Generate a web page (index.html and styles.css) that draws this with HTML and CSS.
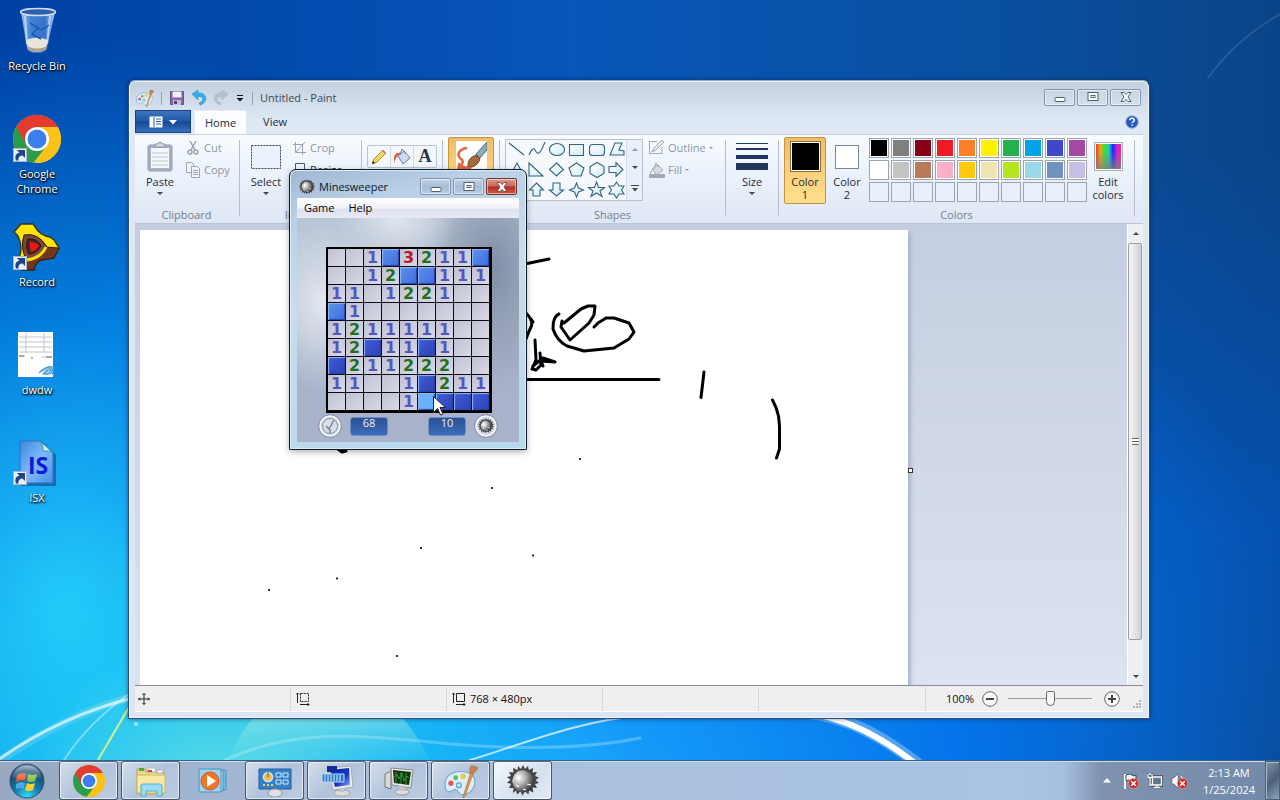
FILE: index.html
```html
<!DOCTYPE html>
<html lang="en">
<head>
<meta charset="utf-8">
<title>Desktop</title>
<link rel="stylesheet" href="styles.css">
</head>
<body>
<svg class="defs" aria-hidden="true">
  <defs>
    <linearGradient id="g-bin" x1="0" x2="1" y1="0" y2="0"><stop offset="0" stop-color="#9dc4ef"/><stop offset=".3" stop-color="#3f7fd4"/><stop offset=".7" stop-color="#3873cb"/><stop offset="1" stop-color="#a5c8f0"/></linearGradient>
    <linearGradient id="g-shape" x1="0" x2="1" y1="0" y2="1"><stop offset="0" stop-color="#ffffff"/><stop offset="1" stop-color="#d3ebf8"/></linearGradient>
    <linearGradient id="g-page" x1="0" x2="1" y1="0" y2="1"><stop offset="0" stop-color="#3c86da"/><stop offset=".5" stop-color="#7db9fb"/><stop offset="1" stop-color="#4a90e8"/></linearGradient>
    <linearGradient id="g-screen" x1="0" x2="1" y1="0" y2="1"><stop offset="0" stop-color="#0822a8"/><stop offset=".6" stop-color="#1735c4"/><stop offset="1" stop-color="#8fb2f5"/></linearGradient>
    <radialGradient id="g-mine" cx=".3" cy=".35" r=".75"><stop offset="0" stop-color="#ffffff"/><stop offset=".4" stop-color="#b8b8b8"/><stop offset="1" stop-color="#303030"/></radialGradient>
    <radialGradient id="g-orb" cx=".5" cy=".95" r=".95"><stop offset="0" stop-color="#30dcf5"/><stop offset=".4" stop-color="#127cae"/><stop offset=".8" stop-color="#1c4569"/><stop offset="1" stop-color="#6f8fae"/></radialGradient>
    <linearGradient id="g-shine" x1="0" x2="0" y1="0" y2="1"><stop offset="0" stop-color="#fff" stop-opacity=".75"/><stop offset="1" stop-color="#fff" stop-opacity=".1"/></linearGradient>
    <linearGradient id="g-rainbow"><stop offset="0" stop-color="#f43e23"/><stop offset=".18" stop-color="#e8a71e"/><stop offset=".35" stop-color="#2fe32f"/><stop offset=".52" stop-color="#1fc7c7"/><stop offset=".68" stop-color="#2323f5"/><stop offset=".85" stop-color="#d91fe0"/><stop offset="1" stop-color="#f02a60"/></linearGradient>
    <linearGradient id="g-fade" x1="0" x2="0" y1="0" y2="1"><stop offset=".3" stop-color="#808080" stop-opacity="0"/><stop offset="1" stop-color="#808080" stop-opacity=".8"/></linearGradient>
    <linearGradient id="g-beam" x1="0" x2="0" y1="0" y2="1"><stop offset="0" stop-color="#c8f6d8" stop-opacity=".5"/><stop offset="1" stop-color="#7fe6f0" stop-opacity=".08"/></linearGradient>
    <symbol id="i-chrome" viewBox="0 0 48 48">
      <circle cx="24" cy="24" r="24" fill="#fbc31a"/>
      <path d="M24 24 3.2 12A24 24 0 0 0 20.5 47.7L34.4 30Z" fill="#2a9d4a"/>
      <path d="M3.2 12A24 24 0 0 1 44.8 12H24L13.6 30Z" fill="#e33b2e"/>
      <path d="M24 12H44.8A24 24 0 0 1 22.8 48L34.4 30Z" fill="#fbc31a"/>
      <circle cx="24" cy="24" r="12" fill="#fff"/><circle cx="24" cy="24" r="9.5" fill="#3b7fee"/>
    </symbol>
    <symbol id="i-short" viewBox="0 0 14 14">
      <path d="M0 0h14v14H0z" fill="#e9eff6"/><path d="M.5.5h13v13H.5z" fill="none" stroke="#a9b6c6"/>
      <path d="M3 12.500C1.500 8 3 5 6.500 4.700L4 2h8v8L9.500 7.500C7 7.500 5 9 5.500 12.500z" fill="#1d4585"/>
    </symbol>
    <symbol id="i-mine" viewBox="0 0 32 32">
      <path d="M16 0l2 4 3-3 .8 4L26 3l-.5 4.500 4.500-.5-2 4 4 1.500-3.500 2.500 3.500 3-4 1 2 4-4.500-.5 1 5-4.500-2-.5 4-3.500-3-2.500 4-2-4-3.500 3-.8-4L6 28l.5-5L2 23l2-4-4-1.500L3.500 15 0 12l4-1-2-4 4.500.5L6 3l4.500 2 .5-4 3 3z" fill="#454545"/>
      <path d="M16 5l3 1 4 2 3 4 1 4-2 6-4 4-5 1-5-1-4-4-2-6 2-6 4-4z" fill="url(#g-mine)"/>
      <path d="M9 13l4-1M11 10l1 5M20 19l4 1M16 24l3 1M9 20l3 2" stroke="#fff" stroke-width="1.200"/>
    </symbol>
    <symbol id="i-palette" viewBox="0 0 32 32">
      <path d="M1 19C1 11 8 7 16 7s13 4 13 10-5 12-12 12c-4 0-3-4-6-5-3-.5-4 3-7 2s-3-4-3-7z" fill="#dceefa" stroke="#6ba5cf" stroke-width="1"/>
      <circle cx="6.500" cy="18" r="2.400" fill="#e05555"/><circle cx="11" cy="13" r="2.300" fill="#66bb58"/><circle cx="18" cy="11.500" r="2.600" fill="#e6cf45"/><circle cx="14" cy="20" r="2.300" fill="#d6ebfa" stroke="#5aa2d8" stroke-width="1.200"/>
      <path d="M25 8l2.500 1-8 22-2 1z" fill="#dc9550" stroke="#b06a28" stroke-width=".5"/><path d="M24 9c0-4-1-5 2-8l6 2c1 3-3 3-4 7z" fill="#c08050"/>
    </symbol>
    <symbol id="i-flag" viewBox="0 0 12 12"><circle cx="6" cy="6" r="5.500" fill="#d22b24" stroke="#f3a09b" stroke-width=".6"/><path d="M3.500 3.500l5 5M8.500 3.500l-5 5" stroke="#fff" stroke-width="1.700"/></symbol>
  </defs>
</svg>

<main class="desktop">
  <svg class="wallpaper" viewBox="0 0 1280 760" preserveAspectRatio="none" aria-hidden="true">
    <g fill="none" stroke="#fff" stroke-linecap="round">
      <path d="M-5 764Q70 712 136 696" stroke-width="8" opacity=".15"/>
      <path d="M-2 760Q60 716 136 697" stroke-width="3" opacity=".65"/>
      <path d="M64 760Q90 720 135 690" stroke-width="2" opacity=".4"/>
      <path d="M98 760L132 702" stroke="#dff58a" stroke-width="2" opacity=".9"/>
      <path d="M225 760C290 730 350 734 430 742S580 750 640 738" stroke-width="3" opacity=".25"/>
      <path d="M470 760C520 745 580 720 640 716" stroke-width="2" opacity=".7"/>
      <path d="M790 712Q850 710 918 764" stroke-width="12" opacity=".3"/>
      <path d="M790 712Q850 712 916 764" stroke-width="6"/>
      <path d="M1208 78Q1235 40 1280 14" stroke-width="2" opacity=".12"/>
    </g>
    <path d="M228 760Q240 730 260 710H395Q415 730 430 760Z" fill="url(#g-beam)"/>
    <circle cx="136" cy="724" r="2" fill="#9fe9ff"/>
  </svg>

  <nav class="icons" aria-label="Desktop icons">
    <a class="shortcut" href="#bin">
      <svg width="48" height="48" viewBox="0 0 48 48"><path d="M8 5l6 36q1 5 10 5t10-5L42 5z" fill="url(#g-bin)"/><path d="M13 33l2 8q2 4 9 4t9-4l2-8q-11-5-22 0z" fill="#e8e4dc"/><path d="M14 39q10 5 20 0l-1 4q-9 4-18 0z" fill="#aaa493"/><path d="M12 9l2 28M37 9l-3 28" stroke="#d9e9fa" stroke-width="2" opacity=".7"/><path d="M17 16l8 5-6 6 9 5M36 18q-8 7-11 3" stroke="#175bb8" stroke-width="1.500" fill="none"/><ellipse cx="25" cy="5" rx="17.500" ry="3.500" fill="#2860b5" stroke="#d5dfeb" stroke-width="1.500"/></svg>
      <span>Recycle Bin</span>
    </a>
    <a class="shortcut" href="#chrome">
      <svg width="48" height="48" viewBox="0 0 48 48"><use href="#i-chrome"/><use href="#i-short" x="0" y="33" width="14" height="14"/></svg>
      <span>Google<br>Chrome</span>
    </a>
    <a class="shortcut" href="#record">
      <svg width="48" height="48" viewBox="0 0 48 48"><path d="M8 1h12l5 7q5 5 12 6l4 3 5 8-5 10-13 2q-6 3-7 10H9L5 37q6-12 0-24L1 9z" fill="#ffe30a" stroke="#3a3300" stroke-width="1.300"/><path d="M46 25l-5 10-13 2q-6 3-7 10H9l-3-8q16-2 26-15z" fill="#71371d" stroke="#391a0c"/><path d="M11 12q14-3 23 12-7 11-21 12-6-11-2-24z" fill="#7d4630" stroke="#2b1810"/><path d="M33 24q-5 11-19 13" stroke="#ffe30a" stroke-width="3" fill="none"/><path d="M15 16q9-1 13 7-4 7-12 8-4-7-1-15z" fill="#43282a" stroke="#1d1212"/><path d="M17 19q7 0 9 4-3 5-8 6-2-5-1-10z" fill="#ef1515"/><use href="#i-short" x="0" y="33" width="14" height="14"/></svg>
      <span>Record</span>
    </a>
    <a class="shortcut" href="#dwdw">
      <svg width="48" height="48" viewBox="0 0 48 48"><path d="M5 1h35v45H5z" fill="#fff"/><path d="M6 6h33M6 11h33M6 16h33M6 21h33M13 2v20M31 2v20M6 25h6M28 26h11" stroke="#c0c4ca" stroke-width="1"/><path d="M6 25h5M33 26h6M18 27h2" stroke="#7f6d6d"/><path d="M26 42q7-8 15-6l-3 6q-3 2-8 1l5-4M36 36l5 9" stroke="#4a9fd0" fill="#87c6e8" stroke-width="1.200"/></svg>
      <span>dwdw</span>
    </a>
    <a class="shortcut" href="#isx">
      <svg width="48" height="48" viewBox="0 0 48 48"><path d="M8 4h23l12 12v31H8z" fill="#163c73" opacity=".55"/><path d="M7 2h21l12 11v31H7z" fill="url(#g-page)" stroke="#2d71c4"/><path d="M27 2q4 5 3 10 6-1 10 2z" fill="#d0f5f0" stroke="#3f97a8"/><text x="15" y="35" class="isx-text">IS</text><use href="#i-short" x="0" y="32" width="14" height="14"/></svg>
      <span>ISX</span>
    </a>
  </nav>

  <section class="window paint" aria-label="Untitled - Paint">
    <header class="titlebar">
      <svg width="18" height="18" viewBox="0 0 32 32"><use href="#i-palette"/></svg>
      <i class="divider"></i>
      <button class="quick" aria-label="Save"><svg width="16" height="16" viewBox="0 0 16 16"><path d="M1.500 1.500h13v13h-13z" fill="#8466a6" stroke="#6b4c8c"/><path d="M3.500 1.500h9v6h-9z" fill="#eef0fa"/><path d="M4 10h8v5H4z" fill="#c8bedb"/><path d="M5 11h3v3H5z" fill="#59407a"/></svg></button>
      <button class="quick" aria-label="Undo"><svg width="16" height="16" viewBox="0 0 16 16"><path d="M1 4l6-4v3c10-1 10 10 2 12l-1-2c6-2 5-7-1-6.500V10z" fill="#35aee6" stroke="#2290cc" stroke-width=".6"/></svg></button>
      <button class="quick" aria-label="Redo"><svg width="16" height="16" viewBox="0 0 16 16"><path d="M15 4L9 0v3C-1 2-1 13 7 15l1-2C2 11 3 6 9 6.500V10z" fill="#b9c0cb" stroke="#a9b2bf" stroke-width=".6"/></svg></button>
      <button class="quick narrow" aria-label="Customize"><svg width="8" height="8" viewBox="0 0 8 8"><path d="M1 1.500h6" stroke="#111"/><path d="M.5 4h7L4 7.500z" fill="#111"/></svg></button>
      <i class="divider"></i>
      <h1>Untitled - Paint</h1>
      <div class="controls">
        <button aria-label="Minimize"><svg width="12" height="12" viewBox="0 0 12 12"><rect x="1" y="6.500" width="10" height="4" rx="1" fill="#fff" stroke="#53606f"/></svg></button>
        <button aria-label="Maximize"><svg width="12" height="12" viewBox="0 0 12 12"><rect x="1" y="1.500" width="10" height="8" fill="#fff" stroke="#53606f"/><rect x="4" y="4.500" width="4" height="2" fill="#dce5ef" stroke="#53606f"/></svg></button>
        <button aria-label="Close"><svg width="12" height="12" viewBox="0 0 12 12"><path d="M1 1.500h3l2 2 2-2h3L8 6l3 4.500H8l-2-2-2 2H1L4 6z" fill="#fff" stroke="#53606f"/></svg></button>
      </div>
    </header>

    <nav class="tabs">
      <button class="file" aria-label="Paint menu"><svg width="28" height="12" viewBox="0 0 28 12"><path d="M.5.500h13v11H.5z" fill="#fff"/><path d="M5 1v10" stroke="#2a5ca5"/><path d="M7 3h5M7 5.500h5M7 8h5" stroke="#2a5ca5"/><path d="M20 4h8l-4 4.500z" fill="#fff"/></svg></button>
      <button class="tab active">Home</button>
      <button class="tab">View</button>
      <button class="help" aria-label="Help"><svg width="14" height="14" viewBox="0 0 14 14"><circle cx="7" cy="7" r="6.200" fill="#2458c0" stroke="#8ba8dc"/><path d="M4.800 5.300q.2-2 2.300-2t2.200 1.900q0 1-1.200 1.600-.9.500-.9 1.300M7.200 9.300v1.500" fill="none" stroke="#fff" stroke-width="1.500"/></svg></button>
    </nav>

    <div class="ribbon">
      <div class="group g-clip">
        <div class="tools">
          <button class="big"><span class="pic"><svg width="26" height="32" viewBox="0 0 26 32"><rect x="1" y="4" width="24" height="26" rx="2" fill="#a5b1c0" stroke="#919eae"/><path d="M4 7h18v20H4z" fill="#f6f9fc"/><path d="M8 6V3h3q0-2 2-2t2 2h3v3z" fill="#d6dde5" stroke="#8996a8"/><path d="M5 12h16M5 16h16M5 20h16M5 24h16" stroke="#b9c5d3"/></svg></span><span>Paste</span><i class="caret"></i></button>
          <div class="small-col">
            <button class="small off"><svg width="16" height="16" viewBox="0 0 16 16" fill="none" stroke="#98a3b2" stroke-width="1.500"><path d="M5 1l5 9M11 1l-5 9"/><circle cx="5" cy="12" r="2"/><circle cx="11" cy="12" r="2"/></svg>Cut</button>
            <button class="small off"><svg width="16" height="16" viewBox="0 0 16 16" fill="#f1f5fa" stroke="#9ba6b5"><path d="M1.500.5h5l2 2v8h-7z"/><path d="M6.500 4.500h6l2 2v9h-8z"/><path d="M8 8.500h5M8 10.500h5M8 12.500h5"/></svg>Copy</button>
          </div>
        </div>
        <h2>Clipboard</h2>
      </div>
      <div class="group g-image">
        <div class="tools">
          <button class="big"><span class="pic"><svg width="32" height="26" viewBox="0 0 32 26"><rect x="1.500" y="1.500" width="29" height="23" fill="#eaf2fb" stroke="#33475f" stroke-dasharray="2 1"/></svg></span><span>Select</span><i class="caret"></i></button>
          <div class="small-col">
            <button class="small off"><svg width="16" height="16" viewBox="0 0 16 16" fill="none" stroke="#98a3b2"><path d="M4.500 2v10.500H15M2 4.500h9.500V15M5 12l9-10"/></svg>Crop</button>
            <button class="small"><svg width="16" height="16" viewBox="0 0 16 16" fill="#eef5fc" stroke="#445b7a"><path d="M4.500 1.500h9v9h-9z"/></svg>Resize</button>
          </div>
        </div>
        <h2>Image</h2>
      </div>
      <div class="group">
        <div class="tools">
          <div class="toolset">
            <button aria-label="Pencil"><svg width="18" height="18" viewBox="0 0 18 18"><path d="M2 16l2-5 9-9 3 3-9 9z" fill="#f2da58" stroke="#897a32" stroke-width=".8"/><path d="M2 16l1-3 2 2z" fill="#222"/><path d="M12 3l3 3 1-1-3-3z" fill="#df7777"/></svg></button>
            <button aria-label="Fill with color"><svg width="18" height="18" viewBox="0 0 18 18"><path d="M5 8l6-5 6 7-7 6z" fill="#cddcf0" stroke="#6681a9"/><path d="M7 7L9 1l4 5" fill="none" stroke="#6681a9"/><path d="M8 5Q2 4 1 9v6l2-5z" fill="#e1653c"/></svg></button>
            <button aria-label="Text"><b class="letter">A</b></button>
          </div>
        </div>
        <h2>Tools</h2>
      </div>
      <div class="group">
        <div class="tools">
          <button class="big picked brush" aria-label="Brushes"><span class="pic"><svg width="31" height="32" viewBox="0 0 31 32"><path d="M0 0h31v32H0z" fill="#fff"/><path d="M11 7C3 8 0 14 5 18s-2 6-3 10q8 2 14-5" fill="none" stroke="#e8643b" stroke-width="2.500"/><path d="M31 1L20 13l4 4 7-8z" fill="#8cabb8" stroke="#526d78"/><path d="M20 14l4 4q-3 9-12 8-1-9 8-12z" fill="#a66a3a" stroke="#6d472c"/><path d="M2 21q5 5 14 5l-3 6H1z" fill="#e8643b"/></svg></span></button>
        </div>
      </div>
      <div class="group g-shapes">
        <div class="tools">
          <div class="gallery">
            <svg width="120" height="60" viewBox="0 0 120 60" fill="url(#g-shape)" stroke="#2f6583" stroke-width="1.100" role="img" aria-label="Shape gallery">
              <path d="M3 3l15 12" /><path d="M23 15q4-9 6-5t4 3 6-11" fill="none"/><ellipse cx="51" cy="9.500" rx="7.500" ry="6"/><path d="M63.500 4.500h14v11h-14z"/><rect x="83.500" y="4.500" width="15" height="11" rx="3"/><path d="M104 15l5-12h7l-3 7 5 1v4z"/>
              <path d="M11 23l7 13H4z"/><path d="M23 23l14 13H23z"/><path d="M50.500 23l7 6.500-7 6.500-7-6.500z"/><path d="M70.500 23l7.500 5-3 8h-9l-3-8z"/><path d="M91 22.500l7 4v7l-7 4-7-4v-7z"/><path d="M103 26.500h7v-4l7 7-7 7v-4h-7z"/>
              <path d="M3 46.500h7v-4l7 7-7 7v-4H3z"/><path d="M30.500 43l7 7h-3.500v6h-7v-6h-3.500z"/><path d="M50.500 56l7-6H54v-7h-7v7h-3.500z"/><path d="M70.500 43l2 5 5 2-5 2-2 5-2-5-5-2 5-2z"/><path d="M90.500 42l2 5.500h6l-4.500 3.500 2 5.500-5.500-3.500-5.500 3.500 2-5.500-4.500-3.500h6z"/><path d="M110.500 42l2.500 4h5l-2.500 4 2.500 4h-5l-2.500 4-2.500-4h-5l2.500-4-2.500-4h5z"/>
            </svg>
            <div class="gallery-nav">
              <button disabled aria-label="Scroll up"><i class="caret up"></i></button><button aria-label="Scroll down"><i class="caret"></i></button><button aria-label="More"><svg width="8" height="8" viewBox="0 0 8 8"><path d="M0 1.500h8" stroke="#3c4656"/><path d="M1 4h6L4 7.500z" fill="#3c4656"/></svg></button>
            </div>
          </div>
          <div class="small-col">
            <button class="small off"><svg width="16" height="16" viewBox="0 0 16 16" fill="#e6ebf2" stroke="#a0a9b6"><path d="M13 7v6.500H.5v-12h8" fill="none"/><path d="M3 12l2-4 8-8 2 2-8 8z"/></svg>Outline<i class="caret"></i></button>
            <button class="small off"><svg width="16" height="16" viewBox="0 0 16 16" fill="#d6dce5" stroke="#a0a9b6"><path d="M3 7l6-4 5 5-6 5z"/><path d="M5 7l2-6 3 4M3 8l-2 4" fill="none"/><path d="M.5 12.500h15v3H.5z" fill="#a0a9b6"/></svg>Fill<i class="caret"></i></button>
          </div>
        </div>
        <h2>Shapes</h2>
      </div>
      <div class="group">
        <div class="tools">
          <button class="big"><span class="pic"><svg width="32" height="30" viewBox="0 0 32 30" fill="#21365a"><path d="M0 1h32v1H0zM0 6h32v2H0zM0 13h32v4H0zM0 21h32v7H0z"/></svg></span><span>Size</span><i class="caret"></i></button>
        </div>
      </div>
      <div class="group g-colors">
        <div class="tools">
          <button class="big picked"><span class="pic"><i class="ink ink-1"></i></span><span>Color<br>1</span></button>
          <button class="big"><span class="pic"><i class="ink ink-2"></i></span><span>Color<br>2</span></button>
          <div class="palette" id="palette"></div>
          <button class="big"><span class="pic"><svg width="29" height="29" viewBox="0 0 29 29"><path d="M.5.500h28v28H.5z" fill="#fff" stroke="#a7adb5"/><path d="M2 2h25v25H2z" fill="url(#g-rainbow)"/><path d="M2 2h25v25H2z" fill="url(#g-fade)"/></svg></span><span>Edit<br>colors</span></button>
        </div>
        <h2>Colors</h2>
      </div>
    </div>

    <div class="workspace">
      <div class="sheet-area">
        <div class="sheet">
          <svg width="768" height="480" viewBox="140 230 768 480" role="img" aria-label="Drawing" fill="none" stroke="#000" stroke-width="3" stroke-linecap="round" stroke-linejoin="round">
            <path d="M520 265L549 259M480 379.500H659M704 372l-3 25.500M772.500 400q4 7 6 16l1 10v23l-3 9"/>
            <path d="M559 314q-6 2-6 15 4 12 14 17l17 5 30-3 15-9 5-7-5-9-15-5h-8l-8 5-4 4"/>
            <path d="M564 323l17-14 7-3h7l-1 9-5 8-19 17-9-13 1-6"/>
            <path d="M526 313q8 8 5 14t-5 12M530 318l3 4M535 340l1 20-4 9 4 1 5-5-1-12M533 366l10-8 12 4-14-1 2 5M338 449l4 3 4-1"/>
            <path d="M580 459h.1M492 488h.1M421 548h.1M533 555.500h.1M337 578.500h.1M269 590h.1M397 656h.1" stroke-width="2"/>
          </svg>
        </div>
        <i class="handle"></i>
      </div>
      <div class="scrollbar" aria-hidden="true">
        <button tabindex="-1"><i class="caret up"></i></button>
        <div class="thumb"><i></i></div>
        <button tabindex="-1"><i class="caret"></i></button>
      </div>
    </div>

    <footer class="status">
      <div class="cell"><svg width="12" height="12" viewBox="0 0 12 12" fill="none" stroke="#222"><path d="M6 .5v11M.5 6h11M4.500 2L6 .5 7.500 2M4.500 10L6 11.500 7.500 10M2 4.500L.5 6 2 7.500M10 4.500L11.500 6 10 7.500"/></svg></div>
      <div class="cell"><svg width="14" height="14" viewBox="0 0 14 14" fill="none" stroke="#222"><path d="M1.500 11V1M0 2.500L1.500 1 3 2.500M4 12.500h9M11.500 11l1.500 1.500-1.500 1.500"/><path d="M4.500 1.500h8v8h-8z" stroke-dasharray="2 1"/></svg></div>
      <div class="cell"><svg width="14" height="14" viewBox="0 0 14 14" fill="none" stroke="#222"><path d="M1.500 11V1M0 2.500L1.500 1 3 2.500M4 12.500h9M11.500 11l1.500 1.500-1.500 1.500M4.500 1.500h8v8h-8z"/></svg>768 × 480px</div>
      <div class="cell"></div>
      <div class="cell wide"></div>
      <div class="zoom">
        <label for="zoom">100%</label>
        <button aria-label="Zoom out"><svg width="16" height="16" viewBox="0 0 16 16"><circle cx="8" cy="8" r="7.300" fill="#fafafa" stroke="#666"/><path d="M4 8h8" stroke="#444" stroke-width="2"/></svg></button>
        <input id="zoom" type="range" min="0" max="100" value="50">
        <button aria-label="Zoom in"><svg width="16" height="16" viewBox="0 0 16 16"><circle cx="8" cy="8" r="7.300" fill="#fafafa" stroke="#666"/><path d="M4 8h8M8 4v8" stroke="#444" stroke-width="2"/></svg></button>
        <svg class="grip" width="8" height="8" viewBox="0 0 8 8" fill="#b5b5b5"><path d="M6 0h2v2H6zM3 3h2v2H3zM6 3h2v2H6zM0 6h2v2H0zM3 6h2v2H3zM6 6h2v2H6z"/></svg>
      </div>
    </footer>
  </section>

  <section class="window mines" aria-label="Minesweeper">
    <header class="titlebar">
      <svg width="16" height="16" viewBox="0 0 32 32"><use href="#i-mine"/></svg>
      <h1>Minesweeper</h1>
      <div class="controls">
        <button aria-label="Minimize"><svg width="12" height="12" viewBox="0 0 12 12"><rect x="1" y="6.500" width="10" height="4" rx="1" fill="#fff" stroke="#53606f"/></svg></button>
        <button aria-label="Maximize"><svg width="12" height="12" viewBox="0 0 12 12"><rect x="1" y="1.500" width="10" height="8" fill="#fff" stroke="#53606f"/><rect x="4" y="4.500" width="4" height="2" fill="#dce5ef" stroke="#53606f"/></svg></button>
        <button class="close" aria-label="Close"><svg width="12" height="12" viewBox="0 0 12 12"><path d="M1 1.500h3l2 2 2-2h3L8 6l3 4.500H8l-2-2-2 2H1L4 6z" fill="#fff" stroke="#6b3937" stroke-width=".8"/></svg></button>
      </div>
    </header>
    <div class="menu"><button>Game</button><button>Help</button></div>
    <div class="field">
      <div class="board" id="board"></div>
      <div class="score">
        <svg width="24" height="24" viewBox="0 0 24 24"><circle cx="12" cy="12" r="10" fill="#c6d0de" stroke="#f4f6f9" stroke-width="2"/><circle cx="12" cy="12" r="11.300" fill="none" stroke="#73839b" stroke-width=".8"/><circle cx="12" cy="12" r="7.500" fill="#d8dfe9" stroke="#8f9db1"/><path d="M16 6l-5 9-3-3M12 15v4" fill="none" stroke="#6e7c91" stroke-width="1.300"/></svg>
        <output>68</output>
        <output class="right">10</output>
        <svg width="24" height="24" viewBox="0 0 24 24"><circle cx="12" cy="12" r="10" fill="#cdd6e2" stroke="#f4f6f9" stroke-width="2"/><circle cx="12" cy="12" r="11.300" fill="none" stroke="#73839b" stroke-width=".8"/><use href="#i-mine" x="4" y="4" width="16" height="16"/></svg>
      </div>
    </div>
  </section>

  <svg class="cursor" width="13" height="20" viewBox="0 0 13 20" aria-hidden="true"><path d="M.5.500v16l4-4 3 6.500 2.500-1-3-6.500h5.500z" fill="#fff" stroke="#223"/></svg>
</main>

<footer class="taskbar">
  <button class="start" aria-label="Start"><svg width="36" height="36" viewBox="0 0 36 36"><circle cx="18" cy="18" r="17" fill="url(#g-orb)" stroke="#31516f"/><path d="M8 12q5-3 9-1l-1 7q-4-2-9 1z" fill="#ee5a24"/><path d="M19 11q4 2 9 0l-2 7q-4 2-8 0z" fill="#8cc63c"/><path d="M7 21q4-3 9-1l-1 6q-4-2-8 0z" fill="#4aa8ec"/><path d="M18 20q4 2 8 0l-2 7q-4 2-8 0z" fill="#fbcf2c"/><path d="M3 14a15.500 15.500 0 0 1 30 0q-15 5-30 0z" fill="url(#g-shine)" opacity=".65"/></svg></button>
  <button class="task" aria-label="Google Chrome"><svg width="32" height="32" viewBox="0 0 48 48"><use href="#i-chrome"/></svg></button>
  <button class="task" aria-label="Windows Explorer"><svg width="34" height="32" viewBox="0 0 34 32"><path d="M3 4h8l1 3h18v22H3z" fill="#efd984" stroke="#b8a254"/><path d="M5 3h5v3H5z" fill="#43ae3a"/><path d="M14 3h7l1 4H14z" fill="#fff" stroke="#bbb"/><path d="M14 5h4v2h-4z" fill="#d9432f"/><path d="M23 5h6v3h-6z" fill="#fff" stroke="#aaa"/><path d="M3 10h28v18H3z" fill="#f6e9a4" stroke="#cdb765"/><path d="M7 31V21q0-2 2-2h17q2 0 2 2v10h-5v-5H12v5z" fill="#9bdcf3" stroke="#55a9d0"/></svg></button>
  <button class="task idle" aria-label="Media Player"><svg width="32" height="30" viewBox="0 0 32 30"><path d="M8 4h21v20H8z" fill="#74b8e0" stroke="#4b93c6"/><path d="M5 4h21v21H5z" fill="#aedcf2" stroke="#4b93c6"/><path d="M2 3h22v23H2z" fill="#9dd3f0" stroke="#4b93c6"/><circle cx="13" cy="15" r="9" fill="#f0762a" stroke="#cf5a18"/><path d="M10 9v12l9-6z" fill="#fff"/></svg></button>
  <button class="task" aria-label="Control Panel"><svg width="34" height="32" viewBox="0 0 34 32"><path d="M1 4h32v20H1z" fill="#3580c6" stroke="#1f5f9f"/><circle cx="10" cy="12" r="4.500" fill="#f6ba38" stroke="#d2e9f8" stroke-width="1.500"/><path d="M10 12V7" stroke="#2a6cb0"/><path d="M18 8h5v4h-5zM25 8h5v4h-5zM18 15h5v4h-5zM25 15h5v4h-5z" fill="#3580c6" stroke="#d2e9f8"/><path d="M5 20h2M9 20h2M13 20h2" stroke="#f0d060" stroke-width="2"/><ellipse cx="17" cy="28" rx="7" ry="4" fill="#dfe1e2" stroke="#929598"/></svg></button>
  <button class="task" aria-label="On-screen keyboard"><svg width="34" height="32" viewBox="0 0 34 32"><path d="M8 3l23-2 2 21-20 3z" fill="#ececec" stroke="#aaa"/><path d="M10 5l19-2 1 17-15 2z" fill="url(#g-screen)"/><path d="M7 1h10v6H7z" fill="#122a9c"/><path d="M2 9h22v8H2z" fill="#2479c8" stroke="#cfe5fa"/><path d="M4 11h18M4 13h18M4 15h18" stroke="#e8f3fd" stroke-dasharray="2 1"/><ellipse cx="22" cy="28" rx="8" ry="3" fill="#ddd" stroke="#aaa"/><path d="M19 23h5v4h-5z" fill="#c5c5c5"/></svg></button>
  <button class="task" aria-label="System tool"><svg width="34" height="32" viewBox="0 0 34 32"><path d="M3 9l6-3v18l-6-2z" fill="#d9d9d5" stroke="#777"/><path d="M9 3l22 2-2 18-19-3z" fill="#e9e9e5" stroke="#888"/><path d="M11 5l18 2-2 13-15-2z" fill="#10320f"/><path d="M12 12l3-3 2 5 3-6 2 8 3-5 2 2M14 7v11M19 7v12M24 8v11" stroke="#2e9e36" fill="none"/><ellipse cx="20" cy="27" rx="7" ry="3" fill="#ddd" stroke="#999"/><path d="M17 21l6 1v4h-6z" fill="#c5c5c5"/></svg></button>
  <button class="task" aria-label="Paint"><svg width="34" height="34" viewBox="0 0 32 32"><use href="#i-palette"/></svg></button>
  <button class="task current" aria-label="Minesweeper"><svg width="32" height="32" viewBox="0 0 32 32"><use href="#i-mine"/></svg></button>
  <div class="tray">
    <button class="hidden-icons" aria-label="Show hidden icons"><svg width="8" height="5" viewBox="0 0 8 5"><path d="M0 4.500h8L4 0z" fill="#fff"/></svg></button>
    <button aria-label="Action Center"><svg width="16" height="16" viewBox="0 0 16 16"><path d="M2 1v15" stroke="#fff" stroke-width="2"/><path d="M3 2q4-2 6 0t4 0v7q-3 1-5-1t-5 0z" fill="#f6f8fa" stroke="#445"/><use href="#i-flag" x="5" y="5" width="11" height="11"/></svg></button>
    <button aria-label="Network"><svg width="16" height="16" viewBox="0 0 16 16" fill="none"><path d="M4 3.500h11v9H4zM7 14.500h6M10 12v2M1 .5v4h4v-4M3 5v7" stroke="#445" stroke-width="2.600"/><path d="M4.500 4h10v8h-10z" fill="#61758f"/><path d="M5.500 4h9v8h-9zM10 12v2M7 14.500h6M1 1v3.500h4V1M3 5v7h3M3 0v2" stroke="#fff" stroke-width="1.300"/></svg></button>
    <button aria-label="Volume"><svg width="17" height="16" viewBox="0 0 17 16"><path d="M1 5h2l4-4v14l-4-4H1z" fill="#fff" stroke="#445" stroke-width=".5"/><path d="M10 3q2 2 2 4" stroke="#fff" fill="none"/><use href="#i-flag" x="6" y="5" width="11" height="11"/></svg></button>
    <time datetime="2024-01-25T02:13">2:13 AM<br>1/25/2024</time>
  </div>
  <button class="peek" aria-label="Show desktop"></button>
</footer>
<script src="app.js"></script>
</body>
</html>
```
FILE: styles.css
```css
* { box-sizing: border-box; }

body {
  margin: 0;
  min-height: 100vh;
  display: flex;
  flex-direction: column;
  overflow: hidden;
  font: 11px/16px "Open Sans", "Noto Sans", sans-serif;
  color: #1e2b3c;
}

button {
  font: inherit;
  color: inherit;
  padding: 0;
  border: 0;
  background: none;
  display: flex;
  align-items: center;
  justify-content: center;
}

h1, h2 { margin: 0; font-size: inherit; font-weight: 400; }
svg { display: block; flex: none; }
.defs { position: absolute; width: 0; height: 0; }

/* Desktop */
.desktop {
  position: relative;
  flex: 1;
  overflow: hidden;
  background:
    radial-gradient(ellipse 32% 40% at 18% 104%, rgba(110, 235, 225, .85), rgba(30, 205, 245, .6) 50%, transparent),
    radial-gradient(ellipse 36% 76% at 5% 80%, rgba(40, 212, 255, .9), rgba(5, 160, 250, .6) 50%, transparent),
    radial-gradient(ellipse 58% 90% at 46% 104%, #18a2fc, #0474ea 50%, transparent),
    linear-gradient(180deg, transparent 20%, rgba(0, 92, 208, .55) 70%, rgba(0, 92, 208, .2)),
    linear-gradient(90deg, #0040a4, #0756b8 45%, #0a4f9e 80%, #0a4488);
}
.wallpaper { position: absolute; inset: 0; width: 100%; height: 100%; }

.icons {
  position: relative;
  width: 74px;
  display: flex;
  flex-direction: column;
  padding-top: 7px;
}
.shortcut {
  height: 108px;
  display: flex;
  flex-direction: column;
  align-items: center;
  gap: 3px;
  color: #fff;
  line-height: 15px;
  text-align: center;
  text-decoration: none;
  text-shadow: 0 1px 2px #000, 1px 1px 2px #000;
}
.isx-text { font: bold 23px "Open Sans", sans-serif; fill: #0c18d8; text-shadow: none; }

/* Window frame */
.window { position: absolute; display: flex; flex-direction: column; }
.titlebar { display: flex; align-items: center; }
.controls { display: flex; gap: 2px; margin-left: auto; }
.controls button {
  width: 31px;
  height: 17px;
  border: 1px solid #8593a6;
  border-radius: 2px;
  box-shadow: inset 0 0 0 1px rgba(255, 255, 255, .5);
}
.caret {
  border: 3px solid transparent;
  border-top-color: #3c4656;
  border-bottom: 0;
}
.caret.up { border-top: 0; border-bottom: 3px solid #3c4656; }

/* Paint */
.paint {
  inset: 80px 130px 41px 128px;
  padding: 0 6px 6px;
  border: 1px solid #2b4d78;
  border-top-color: #93a8c2;
  border-radius: 7px 7px 1px 1px;
  background: linear-gradient(#c3d0df, #dfe8f5 40px, #dbe5f3);
  box-shadow: inset 0 0 0 1px #eef4fa, 0 0 4px rgba(0, 10, 40, .5);
}
.paint .titlebar { height: 29px; padding: 5px 2px 0 1px; gap: 6px; }
.paint .controls { padding-bottom: 2px; }
.divider { width: 1px; height: 13px; margin: 0 1px; background: #97a3b3; }
.quick { width: 16px; height: 16px; }
.quick.narrow { width: 10px; }
.paint h1 { color: #3b4654; }

.tabs { height: 24px; display: flex; align-items: stretch; padding: 0 4px 0 0; }
.file {
  width: 56px;
  margin: 0 3px 1px 0;
  border: 1px solid #174480;
  background: linear-gradient(#3f74bd, #2058a8 48%, #17468f 52%, #3572c2);
}
.tab { padding: 0 10px; border: 1px solid transparent; }
.tab.active { background: #fbfdff; border-color: #e1e9f3; border-bottom: 0; }
.tab:nth-child(3) { margin-left: 5px; }
.help { margin-left: auto; }

.ribbon {
  height: 90px;
  display: flex;
  border-top: 1px solid #c9d3e0;
  border-bottom: 1px solid #b9c5d8;
  background: linear-gradient(#f9fcff, #ecf3fc 40%, #dfe7f5);
}
.group {
  position: relative;
  display: flex;
  flex-direction: column;
  justify-content: space-between;
  padding: 2px 6px 0 5px;
}
.group:first-child { margin-left: -1px; }
.group::after {
  content: "";
  position: absolute;
  right: 0;
  top: 5px;
  bottom: 7px;
  width: 1px;
  background: #b3c0d1;
}
.group h2 { text-align: center; color: #72808f; }
.tools { display: flex; height: 67px; align-items: flex-start; }
.g-clip { width: 106px; }
.g-image { width: 122px; }
.g-shapes { width: 226px; }
.g-clip .tools, .g-image .tools { gap: 4px; }
.g-shapes .tools { gap: 6px; }
.g-shapes .small .caret { border-width: 2px; border-bottom: 0; }

.big {
  width: 42px;
  min-height: 67px;
  flex-direction: column;
  justify-content: flex-start;
  line-height: 13px;
  border: 1px solid transparent;
  border-radius: 2px;
}
.big .pic { height: 37px; display: flex; align-items: center; }
.big > .caret { margin-top: 4px; }
.picked {
  border-color: #c7933b;
  background: linear-gradient(#f0bd66, #fbd07c 50%, #ffdf8c);
}
.brush { width: 46px; }
.ink { display: block; width: 24px; height: 24px; border: 1px solid #7b8796; }
.ink-1 { width: 31px; height: 31px; background: #000; box-shadow: inset 0 0 0 1px #fff; border-color: #8d6d35; }
.ink-2 { background: #fff; }

.small-col { display: flex; flex-direction: column; align-items: flex-start; }
.small { height: 22px; gap: 3px; }
.off { color: #8b96a5; }
.off .caret { border-top-color: #8b96a5; }

.toolset {
  display: flex;
  margin-top: 8px;
  border: 1px solid #b9c5d5;
  border-radius: 2px;
  background: #f4f8fd;
}
.toolset button { width: 22px; height: 21px; }
.toolset button + button { border-left: 1px solid #cfd8e4; width: 23px; }
.letter { font: bold 18px "Liberation Serif", serif; color: #24344c; }

.gallery {
  display: flex;
  margin-top: 2px;
  border: 1px solid #b4c2d3;
  background: #f5f9fe;
}
.gallery-nav { width: 16px; display: grid; background: #e9f0f9; border-left: 1px solid #d5deea; }
.gallery-nav [disabled] { opacity: .5; }

.palette {
  display: grid;
  grid-template-columns: repeat(10, 20px);
  gap: 2px;
  margin: 1px 0 0 1px;
}
.swatch { height: 20px; border: 1px solid #9ba4b0; box-shadow: inset 0 0 0 1px #fff; }
.swatch.empty { box-shadow: none; background: #e9eff8; }

.workspace { flex: 1; min-height: 0; display: flex; background: linear-gradient(#c5cee0, #dbe3f0); }
.sheet-area { flex: 1; min-width: 0; display: flex; align-items: flex-start; overflow: hidden; padding: 6px 0 0 5px; }
.sheet { background: #fff; box-shadow: 3px 3px 4px #aab4c9; }
.handle { width: 5px; height: 5px; margin: 238px 0 0; border: 1px solid #333; background: #fff; z-index: 1; }
.scrollbar { width: 16px; display: flex; flex-direction: column; background: #eeeff1; border-left: 1px solid #fff; }
.scrollbar button { height: 18px; }
.thumb {
  flex: 1;
  display: grid;
  place-items: center;
  margin: 1px 1px 27px 0;
  border: 1px solid #9a9da3;
  border-radius: 2px;
  background: linear-gradient(90deg, #f6f6f6, #e4e5e8 48%, #cfd0d5);
}
.thumb i { width: 7px; height: 7px; background: repeating-linear-gradient(#666 0 1px, #fff 1px 3px); }

.status {
  height: 27px;
  display: flex;
  align-items: center;
  border-top: 1px solid #878c94;
  border-bottom: 1px solid #fff;
  background: #f0eeee;
  color: #111;
}
.cell { width: 156px; height: 24px; display: flex; align-items: center; gap: 4px; padding-left: 5px; border-right: 1px solid #d9d7d7; }
.cell:first-child { padding-left: 3px; }
.cell.wide { flex: 1; }
.zoom { display: flex; align-items: center; gap: 8px; padding: 0 2px 0 20px; }
.zoom input { width: 84px; height: 18px; margin: 0 4px 0 2px; appearance: none; background: linear-gradient(#9d9d9d, #9d9d9d) center / 100% 1px no-repeat; }
.zoom input::-webkit-slider-thumb {
  appearance: none;
  width: 9px;
  height: 15px;
  border: 1px solid #666;
  border-radius: 2px 2px 5px 5px;
  background: #f7f7f7;
}
.grip { align-self: flex-end; margin-left: 5px; }

/* Minesweeper */
.mines {
  left: 289px;
  top: 169px;
  padding: 0 7px 7px;
  border: 1px solid #111a24;
  border-radius: 7px 7px 1px 1px;
  background: linear-gradient(165deg, #9fb7d2, #b9d0e7 15%, #c9dcec 40%, #b7d9ed);
  box-shadow: inset 0 0 0 1px #d9f0fc, 0 2px 6px rgba(0, 0, 0, .3);
}
.mines .titlebar { height: 28px; padding: 5px 2px 0 2px; gap: 4px; }
.mines h1 { color: #0c1724; }
.mines .close { border-color: #70332f; background: linear-gradient(#dd9b8d, #c9655a 48%, #b3281d 52%, #cf5f4a); }
.mines .controls button:not(.close) { background: linear-gradient(#c4d4e5, #a5bdd7 50%, #b5cde4); }
.menu { display: flex; height: 20px; gap: 14px; padding: 0 7px; color: #000; background: linear-gradient(#fff, #f1f2fa 50%, #dfe0ee 55%, #e8e9f5); }
.field {
  padding: 30px 28px 4px 30px;
  background:
    radial-gradient(ellipse 70px 90px at 12% 38%, #e2e8ef, transparent),
    radial-gradient(ellipse 60px 50px at 45% 0, #dfe5ec, transparent),
    radial-gradient(ellipse 70px 120px at 88% 22%, #818da3, transparent),
    linear-gradient(#b6c3d5, #a7b2c9 60%, #a9b4cc);
}
.board {
  display: grid;
  grid-template-columns: repeat(9, 18px);
  border: 1px solid #000;
  outline: 1px solid #000;
  width: 164px;
}
.board button {
  height: 18px;
  border: solid #0b0c18;
  border-width: 0 1px 1px 0;
  font: bold 16px/17px "DejaVu Sans", sans-serif;
  background: linear-gradient(135deg, #bfc1d2, #d9d9e6);
}
.board .closed { background: linear-gradient(135deg, #5c92ea, #3f6edb); box-shadow: inset 1px 1px 1px #8cb8f5, inset -1px -1px 1px #2a45a8; }
.board .deep { background: linear-gradient(135deg, #3f5fd8, #2f3fb4); }
.board .hover { background: #69b0fd; }
.n1 { color: #5656c2; }
.n2 { color: #23701f; }
.n3 { color: #c0182b; }
.score { display: flex; align-items: center; margin: 2px -7px 0 -9px; }
.score output {
  width: 38px;
  height: 19px;
  margin-left: 8px;
  border: 1px solid #6f8fc4;
  border-radius: 3px;
  background: linear-gradient(#2c5094, #3c6dbb);
  color: #eef4ff;
  text-align: center;
  line-height: 10px;
}
.score .right { margin: 0 8px 0 auto; }
.cursor { position: absolute; left: 433px; top: 396px; }

/* Taskbar */
.taskbar {
  height: 40px;
  display: flex;
  align-items: stretch;
  border-top: 1px solid #3d6288;
  box-shadow: inset 0 1px 0 #c9dcee;
  background: linear-gradient(90deg, #98a9c1, #a9bfdc 30%, #a9c3e2 80%, #a5c0e0 83%, #7f93b0 86%, #7389a9);
}
.start { width: 54px; margin-right: 5px; }
.task {
  width: 59px;
  margin-right: 3px;
  border: 1px solid #44566e;
  border-top-color: #53647c;
  border-radius: 3px;
  background: linear-gradient(135deg, #d4deec, #b1c3dc 50%, #bccce2);
  box-shadow: inset 0 0 0 1px rgba(255, 255, 255, .6);
}
.task.idle { border-color: transparent; background: none; box-shadow: none; }
.task.current { background: linear-gradient(135deg, #f4f8fc, #d3e0ee 60%, #e2eaf4); }
.tray { margin-left: auto; display: flex; align-items: center; gap: 8px; color: #fff; }
.hidden-icons { margin-right: 4px; }
.tray time { width: 54px; margin: 0 9px 0 6px; text-align: center; line-height: 17px; white-space: nowrap; }
.peek { width: 15px; border: 1px solid #4b5f79; background: linear-gradient(135deg, #8195ae, #4c6079 50%, #8da3bd); box-shadow: inset 1px 1px 0 #a9bacd; }
```
FILE: app.js
```js
// Board rows: digits are open cells, "." is empty, "c" closed, "d" closed in shade, "h" hovered.
const rows = [
  "..1c3211c",
  "..12cc111",
  "11.1221..",
  "c1.......",
  "1211111..",
  "12d11d1..",
  "d211222..",
  "11..1d211",
  "....1hddd",
];
const board = document.getElementById("board");
const kinds = { c: "closed", d: "closed deep", h: "closed hover" };
for (const row of rows) {
  for (const mark of row) {
    const cell = document.createElement("button");
    if (kinds[mark]) {
      cell.className = kinds[mark];
    } else if (mark !== ".") {
      cell.className = "n" + mark;
      cell.textContent = mark;
    }
    board.append(cell);
  }
}

const colors = [
  "#000000", "#7f7f7f", "#880015", "#ed1c24", "#ff7f27", "#fff200", "#22b14c", "#00a2e8", "#3f48cc", "#a349a4",
  "#ffffff", "#c3c3c3", "#b97a57", "#ffaec9", "#ffc90e", "#efe4b0", "#b5e61d", "#99d9ea", "#7092be", "#c8bfe7",
];
const palette = document.getElementById("palette");
for (let i = 0; i < 30; i++) {
  const swatch = document.createElement("button");
  swatch.className = colors[i] ? "swatch" : "swatch empty";
  swatch.setAttribute("aria-label", colors[i] || "Empty color");
  if (colors[i]) swatch.style.background = colors[i];
  palette.append(swatch);
}
```
